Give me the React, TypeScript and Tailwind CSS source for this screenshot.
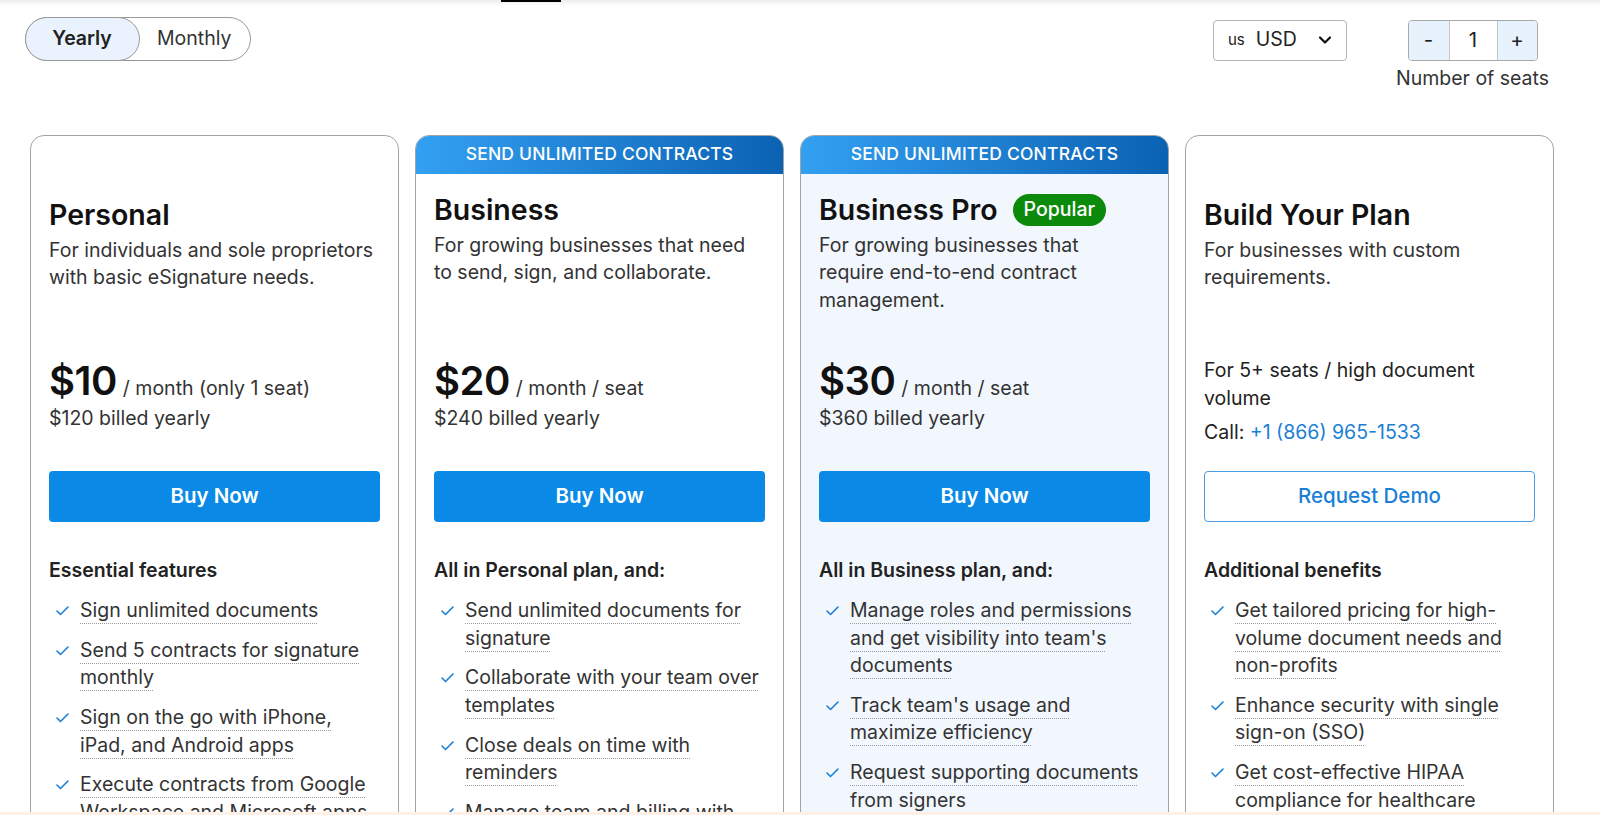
import React from "react";

const font = { fontFamily: "Inter, 'Noto Sans', sans-serif" };

function Check() {
  return (
    <svg width="13" height="10" viewBox="0 0 13 10" className="shrink-0 mt-[9px]">
      <polyline points="1,5 4.5,8.5 12,1" fill="none" stroke="#1a7fd6" strokeWidth="1.6" strokeLinecap="round" strokeLinejoin="round" />
    </svg>
  );
}

type Plan = {
  band: boolean;
  title: string;
  popular?: boolean;
  desc: string;
  priceNode: React.ReactNode;
  button: "buy" | "demo";
  heading: string;
  features: string[];
  bg: string;
};

function Feature({ text }: { text: string }) {
  return (
    <li className="flex gap-[11px] pl-[7px]">
      <Check />
      <span className="text-[19.5px] leading-[27.5px] text-[#333] underline decoration-dotted decoration-[#9a9a9a] underline-offset-[6px] decoration-[1px]">
        {text}
      </span>
    </li>
  );
}

function Price({ amount, per, billed }: { amount: string; per: string; billed: string }) {
  return (
    <div>
      <div className="flex items-baseline gap-[6px]">
        <span className="text-[40px] leading-[48px] font-semibold text-[#111] tracking-[-0.5px]">{amount}</span>
        <span className="text-[19.5px] text-[#333]">{per}</span>
      </div>
      <div className="text-[19.5px] leading-[27.5px] text-[#333]">{billed}</div>
    </div>
  );
}

function Card({ p }: { p: Plan }) {
  return (
    <div className={`w-[369px] shrink-0 rounded-[14px] border border-[#a3a3a3] overflow-hidden ${p.bg}`}>
      {p.band ? (
        <div className="h-[39px] -mx-px -mt-px flex items-center justify-center bg-gradient-to-r from-[#33a0f2] to-[#0b62b3] text-white text-[17.5px] font-medium tracking-[0.2px]">
          SEND UNLIMITED CONTRACTS
        </div>
      ) : null}
      <div className={`px-[18px] ${p.band ? "pt-[18px]" : "pt-[61px]"}`}>
        <div className={p.band ? "h-[165px]" : "h-[160px]"}>
          <div className="flex items-center gap-[15px]">
            <h2 className="text-[28.5px] leading-[35px] font-semibold text-[#111]">{p.title}</h2>
            {p.popular ? (
              <span className="h-[32px] px-[11px] rounded-full bg-[#0c8a0c] text-white text-[19.5px] font-medium flex items-center">Popular</span>
            ) : null}
          </div>
          <p className="mt-[4.5px] max-w-[326px] text-[19.5px] leading-[27.5px] text-[#333]">{p.desc}</p>
        </div>
        <div className="h-[114px] flex flex-col">{p.priceNode}</div>
        {p.button === "buy" ? (
          <button className="w-full h-[51px] rounded-[4px] bg-[#0a8ae6] text-white text-[20.5px] font-semibold">Buy Now</button>
        ) : (
          <button className="w-full h-[51px] rounded-[4px] border border-[#4b9ee3] bg-white text-[#1a7fd6] text-[20.5px] font-medium">Request Demo</button>
        )}
        <h3 className="mt-[35px] text-[19.5px] leading-[27.5px] font-semibold text-[#222]">{p.heading}</h3>
        <ul className="mt-[12.5px] flex flex-col gap-[12.3px] pb-[40px]">
          {p.features.map((f) => (
            <Feature key={f} text={f} />
          ))}
        </ul>
      </div>
    </div>
  );
}

export default function App() {
  const plans: Plan[] = [
    {
      band: false,
      title: "Personal",
      desc: "For individuals and sole proprietors with basic eSignature needs.",
      priceNode: <Price amount="$10" per="/ month (only 1 seat)" billed="$120 billed yearly" />,
      button: "buy",
      heading: "Essential features",
      features: [
        "Sign unlimited documents",
        "Send 5 contracts for signature monthly",
        "Sign on the go with iPhone, iPad, and Android apps",
        "Execute contracts from Google Workspace and Microsoft apps",
      ],
      bg: "bg-white",
    },
    {
      band: true,
      title: "Business",
      desc: "For growing businesses that need to send, sign, and collaborate.",
      priceNode: <Price amount="$20" per="/ month / seat" billed="$240 billed yearly" />,
      button: "buy",
      heading: "All in Personal plan, and:",
      features: [
        "Send unlimited documents for signature",
        "Collaborate with your team over templates",
        "Close deals on time with reminders",
        "Manage team and billing with ease",
      ],
      bg: "bg-white",
    },
    {
      band: true,
      title: "Business Pro",
      popular: true,
      desc: "For growing businesses that require end-to-end contract management.",
      priceNode: <Price amount="$30" per="/ month / seat" billed="$360 billed yearly" />,
      button: "buy",
      heading: "All in Business plan, and:",
      features: [
        "Manage roles and permissions and get visibility into team's documents",
        "Track team's usage and maximize efficiency",
        "Request supporting documents from signers",
      ],
      bg: "bg-[#f2f7fd]",
    },
    {
      band: false,
      title: "Build Your Plan",
      desc: "For businesses with custom requirements.",
      priceNode: (
        <div className="max-w-[326px]">
          <div className="text-[19.5px] leading-[27.5px] text-[#222]">For 5+ seats / high document volume</div>
          <div className="mt-[7.3px] text-[19.5px] leading-[27.5px] text-[#222]">
            Call: <span className="text-[#1a7fd6]">+1 (866) 965-1533</span>
          </div>
        </div>
      ),
      button: "demo",
      heading: "Additional benefits",
      features: [
        "Get tailored pricing for high-volume document needs and non-profits",
        "Enhance security with single sign-on (SSO)",
        "Get cost-effective HIPAA compliance for healthcare",
      ],
      bg: "bg-white",
    },
  ];

  return (
    <div style={font} className="min-h-[815px] bg-white text-[#222]">
      <div className="h-[6px] bg-gradient-to-b from-[#ececec] to-white flex">
        <div className="ml-[501px] w-[60px] h-[2px] bg-black" />
      </div>
      <div className="h-[129px] pt-[11px]">
        <div className="flex items-start">
          <div className="ml-[24.5px] h-[44px] w-[226.5px] rounded-full border border-[#9a9a9a] flex items-stretch">
            <div className="-m-px w-[115px] rounded-full border border-[#9a9a9a] bg-[#eaf3fd] flex items-center justify-center text-[19.5px] font-semibold text-[#222]">
              Yearly
            </div>
            <div className="flex-1 flex items-center justify-center text-[19.5px] text-[#333]">Monthly</div>
          </div>
          <div className="ml-[962px] mt-[2.5px] h-[41px] w-[134px] rounded-[4px] border border-[#b5b5b5] flex items-center pl-[14px]">
            <span className="text-[15px] text-[#222]">us</span>
            <span className="ml-[11px] text-[19.5px] text-[#222]">USD</span>
            <svg width="14" height="10" viewBox="0 0 14 10" className="ml-[21px]">
              <polyline points="2,2.5 7,7.5 12,2.5" fill="none" stroke="#111" strokeWidth="2.2" strokeLinecap="round" strokeLinejoin="round" />
            </svg>
          </div>
          <div className="ml-[45.5px] mt-[2.5px] flex flex-col items-center w-[160px]">
            <div className="h-[41px] w-[130px] rounded-[4px] border border-[#a8a8a8] flex overflow-hidden">
              <div className="w-[41px] bg-[#e8f2fd] border-r border-[#c5c5c5] flex items-center justify-center text-[20.5px] text-[#222]">-</div>
              <div className="flex-1 bg-white flex items-center justify-center text-[20.5px] text-[#222]">1</div>
              <div className="w-[40px] bg-[#e8f2fd] border-l border-[#c5c5c5] flex items-center justify-center text-[20.5px] text-[#222]">+</div>
            </div>
            <div className="mt-[5px] text-[19.5px] leading-[24px] text-[#333] whitespace-nowrap">Number of seats</div>
          </div>
        </div>
      </div>
      <div className="pl-[30px] flex gap-[16px] items-start">
        {plans.map((p) => (
          <Card key={p.title} p={p} />
        ))}
      </div>
      <div className="fixed left-0 right-0 bottom-0 h-[3px] bg-[#fdf0e6]" />
    </div>
  );
}
